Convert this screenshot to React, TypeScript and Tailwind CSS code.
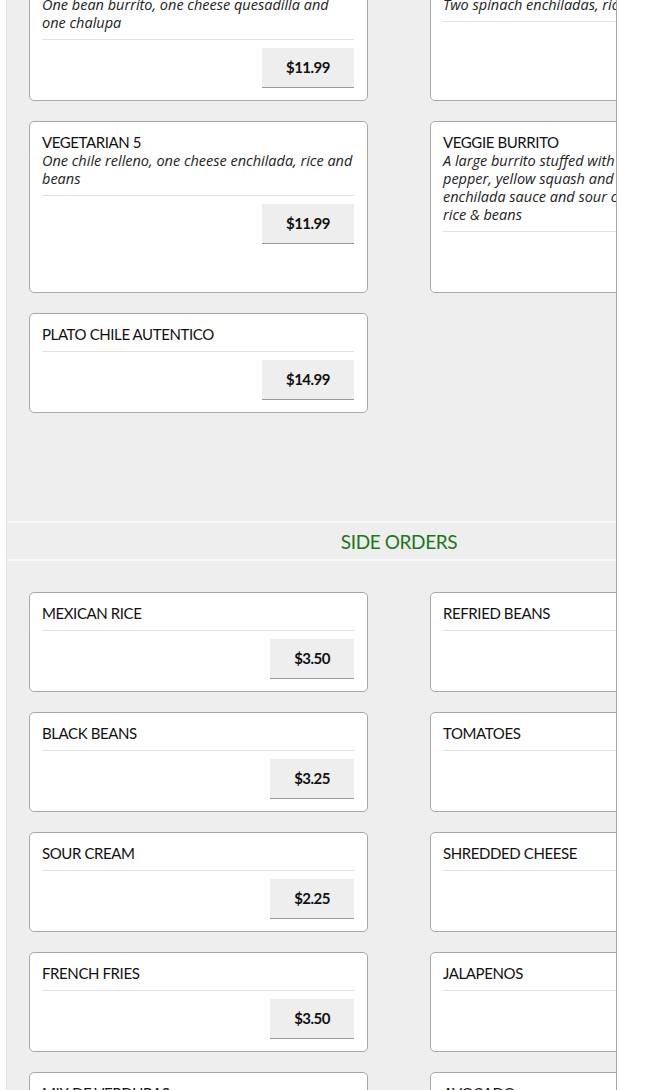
import React from 'react'

interface MenuItem {
  name: string
  description?: string
  price?: string
}

const entreeItems: MenuItem[] = [
  {
    name: 'VEGETARIAN 4',
    description: 'One bean burrito, one cheese quesadilla and one chalupa',
    price: '$11.99'
  },
  {
    name: 'SPINACH ENCHILADAS',
    description: 'Two spinach enchiladas, rice and beans',
    price: '$11.99'
  },
  {
    name: 'VEGETARIAN 5',
    description: 'One chile relleno, one cheese enchilada, rice and beans',
    price: '$11.99'
  },
  {
    name: 'VEGGIE BURRITO',
    description:
      'A large burrito stuffed with spinach, bell\npepper, yellow squash and zucchini, topped with\nenchilada sauce and sour cream, served with\nrice & beans',
    price: '$12.99'
  },
  {
    name: 'PLATO CHILE AUTENTICO',
    price: '$14.99'
  }
]

const sideItems: MenuItem[] = [
  { name: 'MEXICAN RICE', price: '$3.50' },
  { name: 'REFRIED BEANS', price: '$3.50' },
  { name: 'BLACK BEANS', price: '$3.25' },
  { name: 'TOMATOES', price: '$2.25' },
  { name: 'SOUR CREAM', price: '$2.25' },
  { name: 'SHREDDED CHEESE', price: '$2.75' },
  { name: 'FRENCH FRIES', price: '$3.50' },
  { name: 'JALAPENOS', price: '$1.99' },
  { name: 'MIX DE VERDURAS', price: '$4.99' },
  { name: 'AVOCADO', price: '$2.99' }
]

function MenuCard({ item }: { item: MenuItem }) {
  return (
    <div className="flex flex-col rounded-[5px] border border-[#a9a9a9] bg-white pl-3 pr-[13px] pt-[11px] pb-3">
      <h3 className="text-[15px] leading-[18px] text-[#111] tracking-[-0.4px] font-['Lato',sans-serif]">
        {item.name}
      </h3>
      {item.description && (
        <p className="mt-px whitespace-pre-line text-[14.5px] leading-[18px] italic text-[#222] font-['Open_Sans',sans-serif]">
          {item.description}
        </p>
      )}
      <div className={`${item.description ? 'mt-[7px]' : 'mt-2'} border-t border-[#e2e2e2]`} />
      <div className="mt-2 flex justify-end">
        <button className="h-[40px] border-b border-[#9a9a9a] bg-[#eeeeee] px-6 text-[15px] font-bold tracking-[-0.5px] text-[#111] font-['Lato',sans-serif]">
          {item.price}
        </button>
      </div>
    </div>
  )
}

export default function App() {
  return (
    <div className="h-[1090px] w-[650px] overflow-hidden bg-white">
      <div className="ml-[6px] h-full w-[611px] overflow-hidden border-l border-r border-l-[#e2e2e2] border-r-[#a9a9a9] bg-[#eeeeee]">
        <div className="-mt-[35px] w-[784px]">
          <div className="grid grid-cols-[339px_339px] gap-x-[62px] gap-y-5 px-[22px] pb-[108px]">
            {entreeItems.map((item) => (
              <MenuCard key={item.name} item={item} />
            ))}
          </div>

          <div className="flex h-[40px] items-center justify-center border-y-2 border-[#f8f8f8] pt-[3px]">
            <h2 className="text-[19px] tracking-[-0.4px] text-[#1b781b] font-['Lato',sans-serif]">
              SIDE ORDERS
            </h2>
          </div>

          <div className="mt-[31px] grid grid-cols-[339px_339px] gap-x-[62px] gap-y-5 px-[22px]">
            {sideItems.map((item) => (
              <MenuCard key={item.name} item={item} />
            ))}
          </div>
        </div>
      </div>
    </div>
  )
}
